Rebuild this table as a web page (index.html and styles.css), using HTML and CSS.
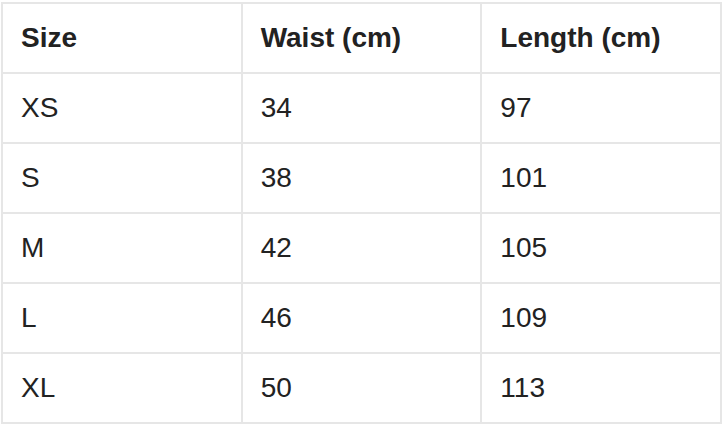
FILE: index.html
```
<!DOCTYPE html>
<html>
<head>
<meta charset="utf-8">
<link rel="stylesheet" href="styles.css">
</head>
<body>
<table class="size-table">
  <colgroup>
    <col class="col">
    <col class="col">
    <col class="col">
  </colgroup>
  <thead>
    <tr><th>Size</th><th>Waist (cm)</th><th>Length (cm)</th></tr>
  </thead>
  <tbody>
    <tr><td>XS</td><td>34</td><td>97</td></tr>
    <tr><td>S</td><td>38</td><td>101</td></tr>
    <tr><td>M</td><td>42</td><td>105</td></tr>
    <tr><td>L</td><td>46</td><td>109</td></tr>
    <tr><td>XL</td><td>50</td><td>113</td></tr>
  </tbody>
</table>
</body>
</html>
```
FILE: styles.css
```
html, body {
  margin: 0;
  background: #ffffff;
}
body {
  padding: 2px 0 0 1px;
  font-family: "Liberation Sans", Arial, sans-serif;
  color: #222222;
}
.size-table {
  width: 721px;
  table-layout: fixed;
  border-collapse: collapse;
  font-size: 28px;
}
.size-table th,
.size-table td {
  border: 2px solid #e6e6e6;
  height: 70px;
  padding: 0 18px;
  text-align: left;
  vertical-align: middle;
  box-sizing: border-box;
}
.size-table th {
  font-weight: 700;
}
.size-table td {
  font-weight: 400;
}
```
